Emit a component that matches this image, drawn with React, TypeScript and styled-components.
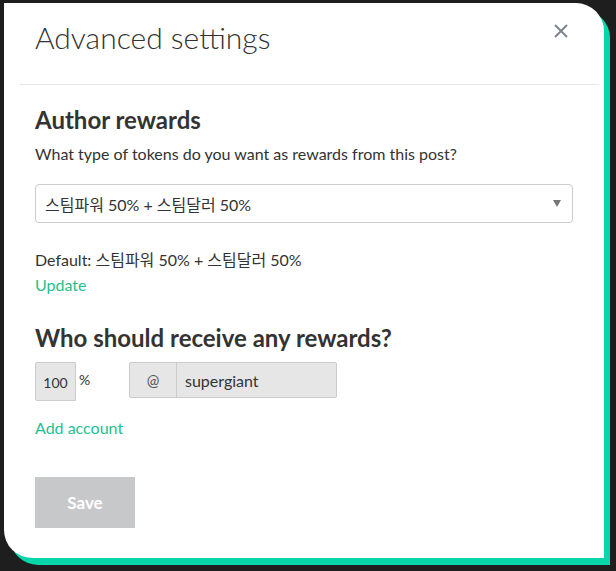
import React from "react";
import styled, { createGlobalStyle } from "styled-components";

const Global = createGlobalStyle`
  html, body { margin: 0; padding: 0; background: #1e1e1e; }
  body { font-family: Lato, "Noto Sans CJK KR", sans-serif; }
  * { box-sizing: border-box; }
`;

const Page = styled.div`
  width: 616px;
  height: 571px;
  padding: 3px 0 0 4px;
  overflow: hidden;
`;

const Modal = styled.div`
  width: 600px;
  height: 555px;
  background: #fff;
  border-radius: 0 28px 0 28px;
  box-shadow: 6px 7px 0 #06d6a9;
  display: flex;
  flex-direction: column;
  color: #333;
`;

const Header = styled.div`
  display: flex;
  justify-content: space-between;
  align-items: flex-start;
  margin: 0 5px 0 16px;
  padding: 16px 0 29px 15px;
  border-bottom: 1px solid #e8e8e8;
`;

const Title = styled.h1`
  margin: 0;
  font-family: Lato, sans-serif;
  font-weight: 300;
  font-size: 30px;
  line-height: 36px;
  color: #333;
`;

const Close = styled.button`
  border: 0;
  background: none;
  padding: 0;
  margin: 5px 31px 0 0;
  width: 14px;
  height: 14px;
  cursor: pointer;
  display: flex;
`;

const Body = styled.div`
  padding: 20px 31px 0 31px;
  display: flex;
  flex-direction: column;
`;

const SectionTitle = styled.h2<{ $top?: number }>`
  margin: ${(p) => p.$top ?? 0}px 0 0;
  font-family: Lato, sans-serif;
  font-weight: 700;
  font-size: 24px;
  line-height: 30px;
  color: #333;
`;

const Text = styled.p<{ $top?: number }>`
  margin: ${(p) => p.$top ?? 0}px 0 0;
  font-size: 16px;
  line-height: 20px;
  color: #333;
`;

const Link = styled.a<{ $top?: number }>`
  margin-top: ${(p) => p.$top ?? 0}px;
  font-size: 16px;
  line-height: 20px;
  color: #1fbf8f;
  text-decoration: none;
  align-self: flex-start;
`;

const Select = styled.div`
  margin-top: 20px;
  width: 538px;
  height: 39px;
  border: 1px solid #ccc;
  border-radius: 4px;
  display: flex;
  align-items: center;
  justify-content: space-between;
  padding: 0 10px 0 9px;
  font-size: 16px;
`;

const Arrow = styled.span`
  width: 0;
  height: 0;
  border-left: 4px solid transparent;
  border-right: 4px solid transparent;
  border-top: 7px solid #777;
  margin-right: 1px;
`;

const BeneRow = styled.div`
  margin-top: 9px;
  display: flex;
  align-items: flex-start;
`;

const PctBox = styled.div`
  width: 41px;
  height: 39px;
  background: #e6e6e6;
  border: 1px solid #ccc;
  border-radius: 2px 0 0 2px;
  display: flex;
  align-items: flex-end;
  justify-content: center;
  padding-bottom: 9px;
  font-size: 14px;
  line-height: 16px;
`;

const PctSign = styled.span`
  font-size: 14px;
  line-height: 16px;
  margin: 10px 0 0 3px;
  width: 50px;
`;

const AccountGroup = styled.div`
  display: flex;
  height: 36px;
  border: 1px solid #ccc;
  border-radius: 2px;
  background: #e6e6e6;
`;

const At = styled.div`
  width: 47px;
  border-right: 1px solid #ccc;
  display: flex;
  align-items: center;
  justify-content: center;
  font-size: 15px;
  color: #555;
`;

const Account = styled.div`
  width: 159px;
  display: flex;
  align-items: center;
  padding-left: 8px;
  font-size: 16px;
`;

const SaveButton = styled.button`
  margin-top: 39px;
  width: 100px;
  height: 51px;
  background: #c7c8ca;
  border: 0;
  color: #fff;
  font-family: Lato, sans-serif;
  font-weight: 700;
  font-size: 17px;
  align-self: flex-start;
`;

const CloseIcon = () => (
  <svg width="14" height="14" viewBox="0 0 14 14">
    <path d="M1 1 L13 13 M13 1 L1 13" stroke="#7d848c" strokeWidth="2" fill="none" />
  </svg>
);

export default function App() {
  return (
    <Page>
      <Global />
      <Modal>
        <Header>
          <Title>Advanced settings</Title>
          <Close aria-label="close">
            <CloseIcon />
          </Close>
        </Header>
        <Body>
          <SectionTitle>Author rewards</SectionTitle>
          <Text $top={9}>What type of tokens do you want as rewards from this post?</Text>
          <Select>
            <span>스팀파워 50% + 스팀달러 50%</span>
            <Arrow />
          </Select>
          <Text $top={27}>Default: 스팀파워 50% + 스팀달러 50%</Text>
          <Link $top={5}>Update</Link>
          <SectionTitle $top={28}>Who should receive any rewards?</SectionTitle>
          <BeneRow>
            <PctBox>100</PctBox>
            <PctSign>%</PctSign>
            <AccountGroup>
              <At>@</At>
              <Account>supergiant</Account>
            </AccountGroup>
          </BeneRow>
          <Link $top={17}>Add account</Link>
          <SaveButton>Save</SaveButton>
        </Body>
      </Modal>
    </Page>
  );
}
